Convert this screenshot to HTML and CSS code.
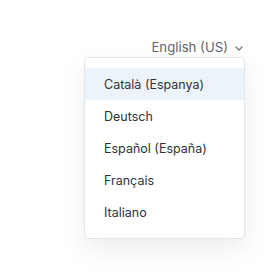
FILE: index.html
```html
<!DOCTYPE html>
<html lang="en">
<head>
    <meta charset="UTF-8">
    <meta name="viewport" content="width=device-width, initial-scale=1.0">
    <title>Language</title>
    <link rel="stylesheet" href="styles.css">
</head>
<body>
    <div class="lang-picker">
        <button class="lang-toggle">
            <span>English (US)</span>
            <svg class="chevron" width="8" height="5" viewBox="0 0 8 5" fill="none">
                <path d="M1 1l3 3 3-3" stroke="#6b7280" stroke-width="1.2" stroke-linecap="round" stroke-linejoin="round"/>
            </svg>
        </button>

        <!-- Language menu -->
        <ul class="lang-menu">
            <li class="active">Català (Espanya)</li>
            <li>Deutsch</li>
            <li>Español (España)</li>
            <li>Français</li>
            <li>Italiano</li>
        </ul>
    </div>
</body>
</html>
```

FILE: styles.css
```css
* {
    box-sizing: border-box;
    margin: 0;
    padding: 0;
}

body {
    font-family: 'Inter', sans-serif;
    background-color: #ffffff;
    width: 267px;
    height: 276px;
    overflow: hidden;
}

.lang-picker {
    display: flex;
    flex-direction: column;
    align-items: flex-end;
    padding: 37px 22px 0 0;
}

.lang-toggle {
    display: flex;
    align-items: center;
    gap: 7px;
    border: none;
    background: none;
    font-family: inherit;
    font-size: 13.2px;
    color: #5f6673;
    height: 20px;
    padding-right: 2px;
}

.chevron {
    margin-top: 2px;
}

.lang-menu {
    list-style: none;
    width: 161px;
    padding: 10px 0 10px;
    background-color: #ffffff;
    border: 1px solid #e3e6ea;
    border-radius: 4px;
    box-shadow: 0 10px 24px rgba(60, 80, 70, 0.1);
}

.lang-menu li {
    height: 32px;
    line-height: 33px;
    padding-left: 19px;
    font-size: 12.5px;
    color: #2f3237;
}

.lang-menu li.active {
    background-color: #edf3fa;
}
```
